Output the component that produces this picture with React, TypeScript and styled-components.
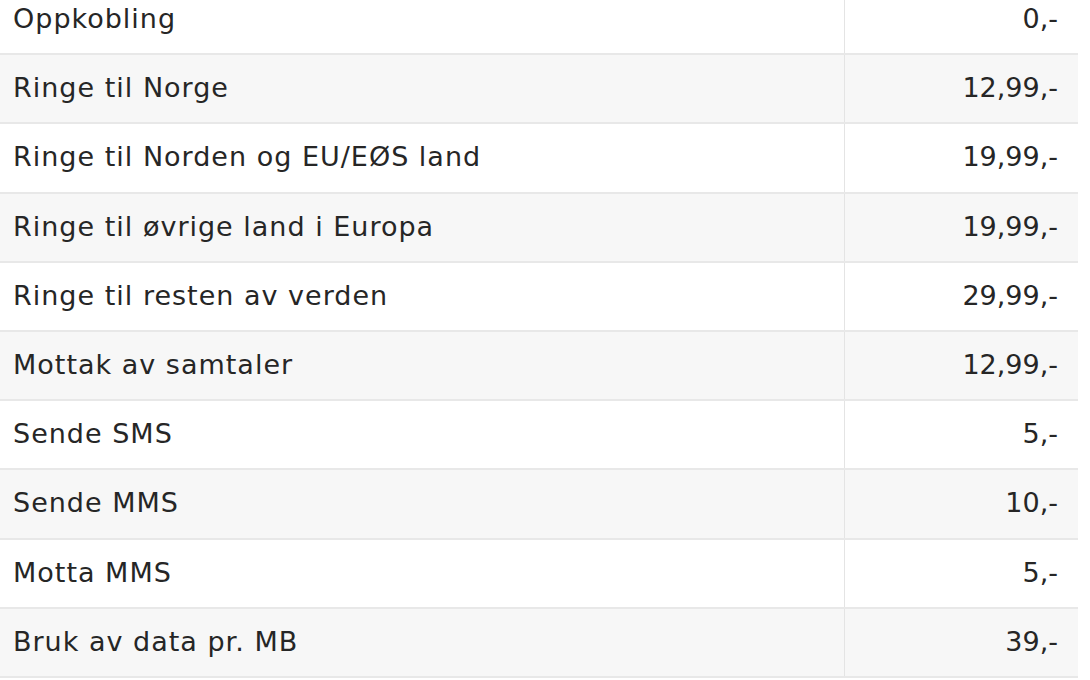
import styled, { createGlobalStyle } from "styled-components";

type Rate = {
  label: string;
  price: string;
};

const rates: Rate[] = [
  { label: "Oppkobling", price: "0,-" },
  { label: "Ringe til Norge", price: "12,99,-" },
  { label: "Ringe til Norden og EU/EØS land", price: "19,99,-" },
  { label: "Ringe til øvrige land i Europa", price: "19,99,-" },
  { label: "Ringe til resten av verden", price: "29,99,-" },
  { label: "Mottak av samtaler", price: "12,99,-" },
  { label: "Sende SMS", price: "5,-" },
  { label: "Sende MMS", price: "10,-" },
  { label: "Motta MMS", price: "5,-" },
  { label: "Bruk av data pr. MB", price: "39,-" },
];

export default function App() {
  return (
    <>
      <GlobalStyle />
      <Viewport>
        <PriceTable>
          <tbody>
            {rates.map((rate, i) => (
              <Row key={rate.label} $striped={i % 2 === 1}>
                <LabelCell>{rate.label}</LabelCell>
                <PriceCell>{rate.price}</PriceCell>
              </Row>
            ))}
          </tbody>
        </PriceTable>
      </Viewport>
    </>
  );
}

const GlobalStyle = createGlobalStyle`
  html, body {
    margin: 0;
    padding: 0;
    background: #ffffff;
  }

  body {
    font-family: "DejaVu Sans", "Open Sans", Arial, sans-serif;
    color: #262626;
  }
`;

const Viewport = styled.div`
  width: 1090px;
  height: 680px;
  overflow: hidden;
`;

const PriceTable = styled.table`
  width: 1078px;
  margin-top: -15px;
  border-collapse: collapse;
  table-layout: fixed;
`;

const Row = styled.tr<{ $striped: boolean }>`
  height: 69.2px;
  background: ${({ $striped }) => ($striped ? "#f7f7f7" : "#ffffff")};
  border-bottom: 2px solid #e8e8e8;
`;

const LabelCell = styled.td`
  width: 844px;
  box-sizing: border-box;
  padding: 0 0 2px 13px;
  font-size: 27px;
  letter-spacing: 1px;
  line-height: 1;
  vertical-align: middle;
  border-right: 1px solid #e4e4e4;
`;

const PriceCell = styled.td`
  padding: 0 20px 2px 0;
  text-align: right;
  font-size: 27px;
  line-height: 1;
  vertical-align: middle;
`;
